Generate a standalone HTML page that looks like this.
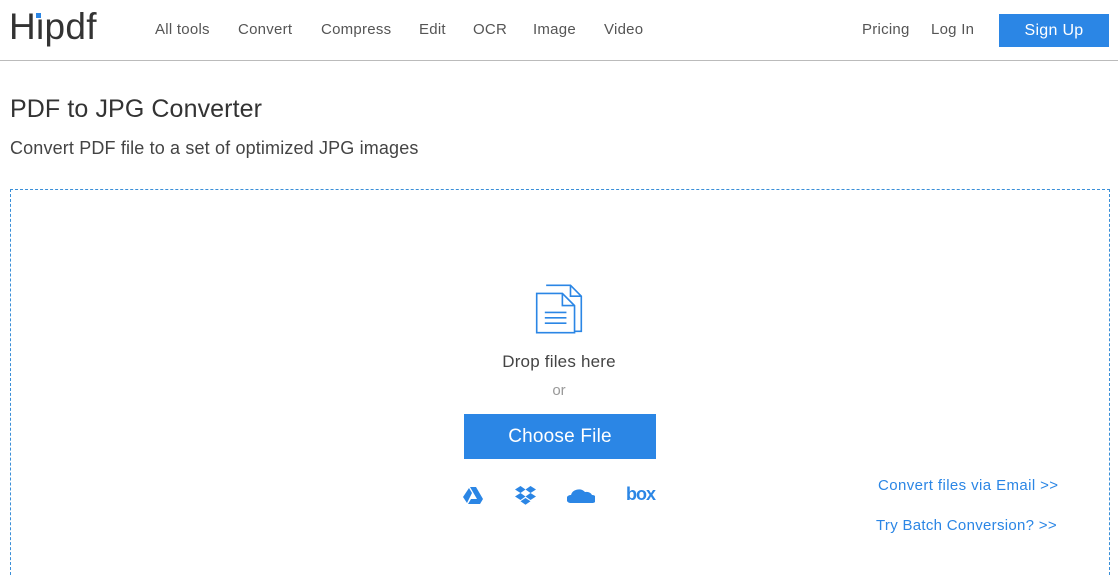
<!DOCTYPE html>
<html><head><style>
*{margin:0;padding:0;box-sizing:border-box}
body{width:1118px;height:575px;background:#fff;font-family:"Liberation Sans",sans-serif;color:#333;position:relative;overflow:hidden}
.a{position:absolute;white-space:nowrap}
.nav{font-size:15px;color:#555;top:21px;letter-spacing:0.25px}
</style></head><body>
<div class="a" style="left:9px;top:6px;font-size:37px;color:#333;letter-spacing:0.3px">Hipdf</div>
<div class="a" style="left:34px;top:10px;width:8px;height:9px;background:#fff"></div>
<div class="a" style="left:36px;top:13px;width:5px;height:5px;background:#2b86e5"></div>
<div class="a nav" style="left:155px">All tools</div>
<div class="a nav" style="left:238px">Convert</div>
<div class="a nav" style="left:321px">Compress</div>
<div class="a nav" style="left:419px">Edit</div>
<div class="a nav" style="left:473px">OCR</div>
<div class="a nav" style="left:533px">Image</div>
<div class="a nav" style="left:604px">Video</div>
<div class="a nav" style="left:862px">Pricing</div>
<div class="a nav" style="left:931px">Log In</div>
<div class="a" style="left:999px;top:14px;width:110px;height:33px;background:#2b86e5;color:#fff;font-size:16px;text-align:center;line-height:33px;letter-spacing:0.3px">Sign Up</div>
<div class="a" style="left:0;top:60px;width:1118px;height:1px;background:#bbb"></div>
<div class="a" style="left:10px;top:95px;font-size:25px;color:#333;letter-spacing:0.1px">PDF to JPG Converter</div>
<div class="a" style="left:10px;top:138px;font-size:18px;color:#444;letter-spacing:0.15px">Convert PDF file to a set of optimized JPG images</div>
<div class="a" style="left:10px;top:189px;width:1100px;height:386px;border:1px dashed #3a8fd8;border-bottom:none"></div>
<svg class="a" style="left:535px;top:284px" width="48" height="50" viewBox="2 3 35 37" fill="none" stroke="#2b86e5" stroke-width="1.2">
<path d="M10 4h18l8 8v26h-5"/><path d="M28 4v8h8"/>
<path d="M3 10h19l9 9v20H3z"/><path d="M22 10v9h9"/>
<path d="M9 24h16M9 28h16M9 32h16"/></svg>
<div class="a" style="left:0;width:1118px;text-align:center;top:352px;font-size:17px;color:#444;letter-spacing:0.2px">Drop files here</div>
<div class="a" style="left:0;width:1118px;text-align:center;top:382px;font-size:15px;color:#999">or</div>
<div class="a" style="left:464px;top:414px;width:192px;height:45px;background:#2b86e5;color:#fff;font-size:19px;text-align:center;line-height:45px;letter-spacing:0.2px">Choose File</div>
<svg class="a" style="left:463px;top:486px" width="20" height="18" viewBox="0 0 20 18" fill="#2b86e5"><path d="M7 1h6l7 12h-6zM6 2l3 5-5 10-4-6zM8 13h12l-3 5H5z"/></svg>
<svg class="a" style="left:515px;top:485px" width="21" height="20" viewBox="0 0 21 20" fill="#2b86e5"><path d="M5.5 1L0 4.5 5.5 8 10.5 4.5zM15.5 1L10.5 4.5 15.5 8 21 4.5zM0 11.5L5.5 15l5-3.5L5.5 8zM15.5 8l-5 3.5 5 3.5 5.5-3.5zM5.5 16.3l5 3.5 5-3.5-5-3.3z"/></svg>
<svg class="a" style="left:567px;top:487px" width="28" height="16" viewBox="0 0 28 16" fill="#2b86e5"><path d="M3 16a4 4 0 0 1 1-8 8 7 0 0 1 14-3 6 5 0 0 1 7 3 4 4 0 0 1 1 8z"/></svg>
<div class="a" style="left:626px;top:484px;font-size:18px;color:#2b86e5;font-weight:bold;letter-spacing:-1px">box</div>
<div class="a" style="left:878px;top:477px;font-size:15px;color:#2b86e5;letter-spacing:0.4px">Convert files via Email &gt;&gt;</div>
<div class="a" style="left:876px;top:517px;font-size:15px;color:#2b86e5;letter-spacing:0.3px">Try Batch Conversion? &gt;&gt;</div>
</body></html>
